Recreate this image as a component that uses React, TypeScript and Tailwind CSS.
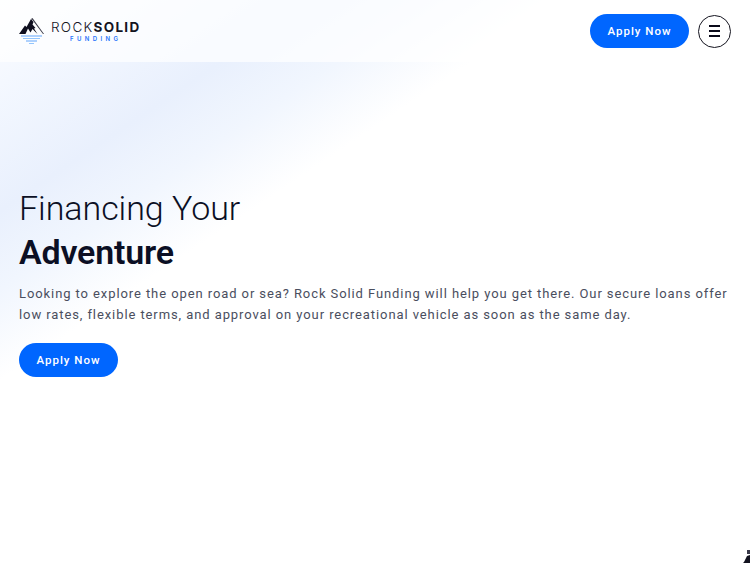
import React from "react";

function Logo() {
  return (
    <div className="flex items-center gap-[5px]">
      <svg width="28" height="30" viewBox="0 0 28 30" className="block">
        <path d="M1 18 L7 9.5 L8.5 11 L13 3 L15.5 6 L14.5 8.5 L17.5 12 L16 12.5 L19.5 18 L14.5 13 L12.5 16.5 L10 12.5 L7.5 18 Z" fill="#0f0f1f" />
        <path d="M13 3 L14.5 2 L26 18 L25 18 L14.5 4 Z" fill="#3a3a48" />
        <path d="M3 19.5 H24 V20.5 H3 Z" fill="#60a5fa" />
        <path d="M5 22 H22 V23 H5 Z" fill="#93c5fd" />
        <path d="M8 24.5 H19 V25.5 H8 Z" fill="#60a5fa" />
        <path d="M11 27 H16 V28 H11 Z" fill="#93c5fd" />
      </svg>
      <div className="flex flex-col items-center leading-none font-['Inter',sans-serif]">
        <div className="text-[13.5px] leading-[14px] tracking-[1.3px] text-[#14141f]">
          <span className="font-light">ROCK</span>
          <span className="font-bold">SOLID</span>
        </div>
        <div className="mt-[1px] text-[6px] leading-[7px] font-semibold tracking-[3.4px] text-[#1f74fb]">FUNDING</div>
      </div>
    </div>
  );
}

export default function App() {
  return (
    <div className="relative h-[563px] w-full overflow-hidden bg-white bg-[linear-gradient(146deg,#fcfdff_0px,#f4f8ff_70px,#e9f0fd_175px,#f1f6fe_240px,#ffffff_315px)] font-['Roboto',sans-serif]">
      <header className="flex h-[62px] items-center justify-between bg-white/70 pl-[18px] pr-[19px]">
        <Logo />
        <div className="flex items-center gap-[9px]">
          <a className="flex h-[34px] w-[99px] items-center justify-center rounded-full bg-[#0066ff] pt-[1px] text-[11.5px] font-medium tracking-[1px] text-white">Apply Now</a>
          <button className="flex h-[33px] w-[33px] flex-col items-center justify-center gap-[3px] rounded-full border border-[#14141f] bg-white">
            <span className="h-[2px] w-[11px] bg-[#0a0a1a]" />
            <span className="h-[2px] w-[11px] bg-[#0a0a1a]" />
            <span className="h-[2px] w-[11px] bg-[#0a0a1a]" />
          </button>
        </div>
      </header>
      <main className="pl-[19px] pr-[19px] pt-[124px]">
        <h1 className="text-[34px] leading-[44px] font-light tracking-[-0.05px] text-[#0b0f24]">Financing Your</h1>
        <h2 className="text-[34px] leading-[44px] font-semibold tracking-[-0.2px] text-[#0b0f24]">Adventure</h2>
        <p className="mt-[10px] text-[13px] leading-[20.8px] tracking-[0.91px] text-[#4a4e5e]">
          Looking to explore the open road or sea? Rock Solid Funding will help you get there. Our secure loans offer low rates, flexible terms, and approval on your recreational vehicle as soon as the same day.
        </p>
        <a className="mt-[17.5px] flex h-[33.5px] w-[99px] items-center justify-center rounded-full bg-[#0066ff] pt-[1px] text-[11.5px] font-medium tracking-[1px] text-white">Apply Now</a>
      </main>
      <svg width="12" height="18" viewBox="0 0 12 18" className="absolute bottom-0 right-0">
        <path d="M6 17 L9 11 L12 10 L12 18 L5 18 Z" fill="#12121f" />
        <rect x="9" y="5" width="3" height="4" fill="#3a3a4a" />
      </svg>
    </div>
  );
}
